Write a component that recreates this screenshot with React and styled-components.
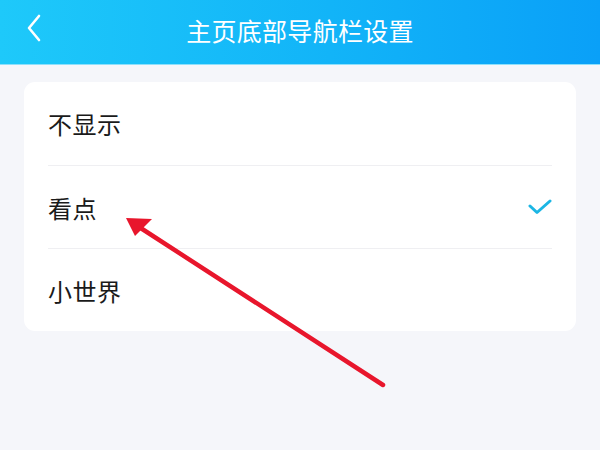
import styled, { createGlobalStyle } from "styled-components";

const Global = createGlobalStyle`
  html, body {
    margin: 0;
    padding: 0;
    background: #f5f6fa;
  }
  * { box-sizing: border-box; }
`;

const Page = styled.div`
  position: relative;
  width: 600px;
  height: 450px;
  overflow: hidden;
  background: #f5f6fa;
  font-family: "Noto Sans CJK SC", "Noto Sans", sans-serif;
`;

const Header = styled.header`
  height: 65px;
  display: flex;
  align-items: center;
  justify-content: center;
  position: relative;
  background: linear-gradient(90deg, #1ec9fa 0%, #12b4f8 55%, #0aa0f8 100%);
  border-bottom: 1px solid #8ee0fb;
`;

const Back = styled.button`
  position: absolute;
  left: 20px;
  top: 13px;
  width: 28px;
  height: 30px;
  padding: 0;
  border: 0;
  background: none;
  display: flex;
  align-items: center;
  justify-content: center;
`;

const Title = styled.h1`
  margin: 0;
  margin-top: -4px;
  color: #fff;
  font-size: 25px;
  font-weight: 400;
  letter-spacing: 0.3px;
`;

const Card = styled.div`
  margin: 17px 24px 0;
  background: #fff;
  border-radius: 11px;
  padding: 0 24px;
`;

const Row = styled.div`
  height: 83px;
  display: flex;
  align-items: center;
  justify-content: space-between;
  border-top: ${(p) => (p.$first ? "none" : "1px solid #efeff2")};
`;

const Label = styled.span`
  font-size: 24px;
  color: #1a1a1a;
  letter-spacing: 0.5px;
`;

const Arrow = styled.svg`
  position: absolute;
  left: 0;
  top: 0;
  pointer-events: none;
`;

const items = [
  { label: "不显示" },
  { label: "看点", checked: true },
  { label: "小世界" },
];

export default function App() {
  return (
    <Page>
      <Global />
      <Header>
        <Back>
          <svg width="20" height="30" viewBox="0 0 20 30">
            <path d="M15 3 L5 15 L15 27" fill="none" stroke="#fff" strokeWidth="2.6" strokeLinecap="round" strokeLinejoin="round" />
          </svg>
        </Back>
        <Title>主页底部导航栏设置</Title>
      </Header>
      <Card>
        {items.map((it, i) => (
          <Row key={it.label} $first={i === 0}>
            <Label>{it.label}</Label>
            {it.checked && (
              <svg width="24" height="18" viewBox="0 0 24 18">
                <path d="M2 8 L9 14.5 L22 3" fill="none" stroke="#1cb6e4" strokeWidth="3" strokeLinecap="round" strokeLinejoin="round" />
              </svg>
            )}
          </Row>
        ))}
      </Card>
      <Arrow width="600" height="450" viewBox="0 0 600 450">
        <line x1="383" y1="385" x2="136" y2="225" stroke="#e8162c" strokeWidth="4.5" strokeLinecap="round" />
        <polygon points="126,218 152,219 135,236" fill="#e8162c" />
      </Arrow>
    </Page>
  );
}
